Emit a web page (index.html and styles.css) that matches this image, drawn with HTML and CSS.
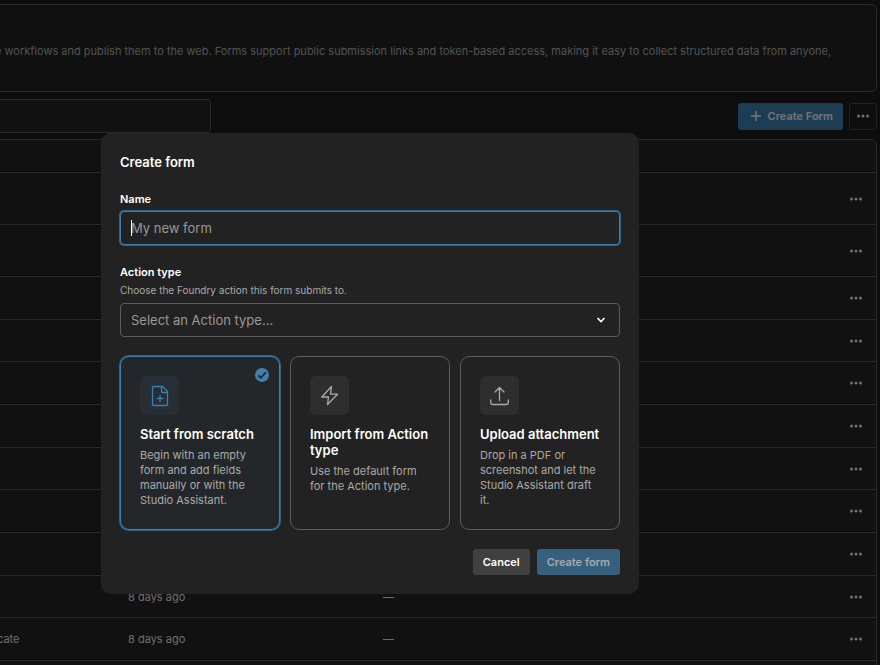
FILE: index.html
```
<!DOCTYPE html>
<html lang="en">

<head>
    <meta charset="UTF-8">
    <meta name="viewport" content="width=device-width, initial-scale=1.0">
    <title>Create form</title>
    <link rel="stylesheet" href="styles.css">
</head>

<body>
    <!-- shared icons -->
    <svg class="sprite" aria-hidden="true">
        <symbol id="dots" viewBox="0 0 12 4">
            <circle cx="1.500" cy="2" r="1.5" />
            <circle cx="6" cy="2" r="1.5" />
            <circle cx="10.500" cy="2" r="1.5" />
        </symbol>
    </svg>

    <main class="page">
        <section class="intro">
            <p>e workflows and publish them to the web. Forms support public submission links and token-based access, making it easy to collect structured data from anyone,</p>
        </section>

        <div class="toolbar">
            <input class="search" type="search" aria-label="Search forms">
            <div class="toolbar-actions">
                <button class="btn btn-new" type="button">
                    <svg width="12" height="12" viewBox="0 0 12 12"><path d="M6 1v10M1 6h10" /></svg>
                    Create Form
                </button>
                <button class="btn btn-more" type="button" aria-label="More actions"><svg class="dots"><use href="#dots" /></svg></button>
            </div>
        </div>

        <div class="table-wrap">
            <table class="forms">
                <thead>
                    <tr><th class="col-name"></th><th class="col-date"></th><th></th><th class="col-menu"></th></tr>
                </thead>
                <tbody>
                    <tr class="tall"><td></td><td></td><td></td><td><button class="row-menu" type="button" aria-label="Row menu"><svg class="dots"><use href="#dots" /></svg></button></td></tr>
                    <tr class="tall"><td></td><td></td><td></td><td><button class="row-menu" type="button" aria-label="Row menu"><svg class="dots"><use href="#dots" /></svg></button></td></tr>
                    <tr><td></td><td></td><td></td><td><button class="row-menu" type="button" aria-label="Row menu"><svg class="dots"><use href="#dots" /></svg></button></td></tr>
                    <tr><td></td><td></td><td></td><td><button class="row-menu" type="button" aria-label="Row menu"><svg class="dots"><use href="#dots" /></svg></button></td></tr>
                    <tr><td></td><td></td><td></td><td><button class="row-menu" type="button" aria-label="Row menu"><svg class="dots"><use href="#dots" /></svg></button></td></tr>
                    <tr><td></td><td></td><td></td><td><button class="row-menu" type="button" aria-label="Row menu"><svg class="dots"><use href="#dots" /></svg></button></td></tr>
                    <tr><td></td><td></td><td></td><td><button class="row-menu" type="button" aria-label="Row menu"><svg class="dots"><use href="#dots" /></svg></button></td></tr>
                    <tr><td></td><td></td><td></td><td><button class="row-menu" type="button" aria-label="Row menu"><svg class="dots"><use href="#dots" /></svg></button></td></tr>
                    <tr><td></td><td></td><td></td><td><button class="row-menu" type="button" aria-label="Row menu"><svg class="dots"><use href="#dots" /></svg></button></td></tr>
                    <tr><td></td><td>8 days ago</td><td>—</td><td><button class="row-menu" type="button" aria-label="Row menu"><svg class="dots"><use href="#dots" /></svg></button></td></tr>
                    <tr><td>cate</td><td>8 days ago</td><td>—</td><td><button class="row-menu" type="button" aria-label="Row menu"><svg class="dots"><use href="#dots" /></svg></button></td></tr>
                    <tr><td></td><td></td><td></td><td></td></tr>
                </tbody>
            </table>
        </div>
    </main>

    <div class="backdrop">
        <form class="modal" role="dialog" aria-labelledby="modal-title">
            <h2 class="modal-title" id="modal-title">Create form</h2>

            <div class="field">
                <label for="form-name">Name</label>
                <div class="input-wrap">
                    <input class="control focused" id="form-name" type="text" placeholder="My new form">
                    <span class="caret"></span>
                </div>
            </div>

            <div class="field">
                <label for="action-type">Action type</label>
                <p class="hint" id="action-hint">Choose the Foundry action this form submits to.</p>
                <div class="input-wrap">
                    <select class="control" id="action-type" aria-describedby="action-hint">
                        <option>Select an Action type...</option>
                    </select>
                    <svg class="chevron" width="10" height="6" viewBox="0 0 10 6"><path d="M1.5 1L5 4.5 8.5 1" /></svg>
                </div>
            </div>

            <div class="options">
                <label class="option selected">
                    <input type="radio" name="source" checked>
                    <svg class="check" width="14" height="14" viewBox="0 0 14 14"><circle cx="7" cy="7" r="7" /><path d="M3.3 7.3L5.9 9.8 10.8 4.2" /></svg>
                    <span class="option-icon">
                        <svg width="20" height="22" viewBox="0 0 20 22"><path d="M3.500 1.500H12.500L17.500 6.500V19.500Q17.500 20.500 16.500 20.500H3.500Q2.500 20.500 2.500 19.500V2.500Q2.500 1.500 3.500 1.500ZM11.500 1.800V6.500Q11.500 7.500 12.500 7.500H17.300M10 10.500V16.500M7 13.500H13" /></svg>
                    </span>
                    <span class="option-title">Start from scratch</span>
                    <span class="option-text">Begin with an empty form and add fields manually or with the Studio Assistant.</span>
                </label>
                <label class="option">
                    <input type="radio" name="source">
                    <span class="option-icon">
                        <svg width="20" height="22" viewBox="0 0 20 22"><path d="M11.500 1.500L1.800 12H8.500L7.500 19.500L17.500 9.200H10.500Z" /></svg>
                    </span>
                    <span class="option-title">Import from Action type</span>
                    <span class="option-text">Use the default form for the Action type.</span>
                </label>
                <label class="option">
                    <input type="radio" name="source">
                    <span class="option-icon">
                        <svg width="20" height="22" viewBox="0 0 20 22"><path d="M9.500 15.500V2.500M5 7L9.500 2.500 14 7M.7 14.800V17.300Q.7 19.500 3 19.500H16Q18.300 19.500 18.300 17.300V14.800" /></svg>
                    </span>
                    <span class="option-title">Upload attachment</span>
                    <span class="option-text">Drop in a PDF or screenshot and let the Studio Assistant draft it.</span>
                </label>
            </div>

            <div class="modal-actions">
                <button class="btn btn-cancel" type="button">Cancel</button>
                <button class="btn btn-submit" type="submit" disabled>Create form</button>
            </div>
        </form>
    </div>
</body>

</html>
```
FILE: styles.css
```
* {
    box-sizing: border-box;
}

body {
    margin: 0;
    height: 100vh;
    overflow: hidden;
    background-color: #1a1a1a;
    color: #fff;
    font-family: Inter, "Liberation Sans", sans-serif;
    font-size: 11px;
    line-height: 16px;
}

button,
input,
select {
    font: inherit;
    color: inherit;
}

.sprite {
    display: none;
}

.dots {
    display: block;
    width: 12px;
    height: 4px;
    fill: #e0e0e0;
}

/* page behind the dialog, it runs on past the left edge */
.page {
    height: calc(100vh - 4px);
    margin: 4px 3px 0 -8px;
    overflow: hidden;
}

.intro {
    height: 88px;
    padding: 38px 0 0 2px;
    border: 1px solid #545454;
    border-radius: 6px;
    background-color: #202020;
    color: #a4a4a4;
}

.intro p {
    margin: 0;
    white-space: nowrap;
}

.toolbar {
    display: flex;
    justify-content: space-between;
    align-items: center;
    margin: 7px 0 6px;
}

.search {
    width: 219px;
    height: 34px;
    border: 1px solid #545454;
    border-radius: 4px;
    background-color: #222;
}

.toolbar-actions {
    display: flex;
    gap: 6px;
}

.btn {
    display: flex;
    align-items: center;
    justify-content: center;
    height: 27px;
    padding: 0 10px;
    border: 0;
    border-radius: 3px;
    font-weight: 600;
}

.btn-new {
    gap: 6px;
    padding-left: 12px;
    background-color: #3b7ba8;
    color: #e8e8e8;
}

.btn-new svg {
    fill: none;
    stroke: #e8e8e8;
    stroke-width: 1.5;
}

.btn-more {
    width: 28px;
    padding: 0;
    border: 1px solid #444;
    background-color: #1c1c1c;
}

.table-wrap {
    border: 1px solid #545454;
    border-radius: 6px;
    background-color: #222;
    overflow: hidden;
}

.forms {
    width: 100%;
    border-spacing: 0;
    table-layout: fixed;
    color: #ddd;
}

.forms th,
.forms td {
    height: 43px;
    padding: 0 0 0 6px;
    border-bottom: 1px solid #545454;
}

.forms tr:nth-child(3n+1) td {
    height: 42px;
}

.forms thead th {
    height: 33px;
}

.forms tbody tr.tall td {
    height: 52px;
}

.forms td:first-child {
    padding-left: 4px;
}

.forms td:last-child {
    padding-left: 7px;
}

.forms .col-name {
    width: 129px;
}

.forms .col-date {
    width: 255px;
}

.forms .col-menu {
    width: 33px;
}

.row-menu {
    display: block;
    padding: 0;
    border: 0;
    background: none;
}

.backdrop {
    position: absolute;
    inset: 0;
    display: flex;
    justify-content: center;
    align-items: flex-start;
    padding: 133px 140px 0 0;
    background-color: rgba(0, 0, 0, 0.5);
}

.modal {
    width: 100%;
    max-width: 538px;
    padding: 19px;
    border-radius: 10px;
    background-color: #222;
}

.modal-title {
    margin: 0 0 19px;
    font-size: 13px;
    font-weight: 600;
    line-height: 20px;
}

.field {
    margin-bottom: 19px;
}

.field label {
    display: block;
    margin-bottom: 4px;
    font-weight: 600;
}

.hint {
    margin: -2px 0 5px;
    color: #aaa;
    font-size: 10px;
}

.input-wrap {
    position: relative;
}

.control {
    display: block;
    width: 100%;
    height: 34px;
    padding: 0 10px;
    border: 1px solid #5c5c5c;
    border-radius: 4px;
    outline: 0;
    background-color: #222;
    color: #999;
    font-size: 13px;
    appearance: none;
}

.control::placeholder {
    color: #999;
}

.control.focused {
    border-color: #3a7fae;
    box-shadow: 0 0 0 1px #2f6489;
}

.caret {
    position: absolute;
    top: 9px;
    left: 11px;
    width: 1px;
    height: 16px;
    background-color: #fff;
}

.chevron {
    position: absolute;
    top: 14px;
    right: 14px;
    fill: none;
    stroke: #fff;
    stroke-width: 1.6;
    pointer-events: none;
}

.options {
    display: grid;
    grid-template-columns: repeat(3, 1fr);
    gap: 10px;
    margin-bottom: 19px;
}

.option {
    position: relative;
    display: flex;
    flex-direction: column;
    align-items: flex-start;
    min-height: 174px;
    padding: 19px;
    border: 1px solid #5c5c5c;
    border-radius: 9px;
}

.option input {
    position: absolute;
    opacity: 0;
}

.option.selected {
    border-color: #3a7fae;
    background-color: #242729;
    box-shadow: 0 0 0 1px #2f6489;
}

.option-icon {
    display: flex;
    align-items: center;
    justify-content: center;
    width: 39px;
    height: 39px;
    margin-bottom: 11px;
    border-radius: 6px;
    background-color: #2e2e2e;
}

.option-icon svg {
    fill: none;
    stroke: #aaa;
    stroke-width: 1.3;
    stroke-linejoin: round;
    stroke-linecap: round;
}

.selected .option-icon {
    background-color: #272e35;
}

.selected .option-icon svg {
    stroke: #3a7fae;
}

.check {
    position: absolute;
    top: 11px;
    right: 10px;
    fill: #3f80ac;
}

.check path {
    fill: none;
    stroke: #222;
    stroke-width: 1.7;
}

.option-title {
    margin-bottom: 6px;
    font-size: 13px;
    font-weight: 600;
}

.option-text {
    color: #aaa;
    line-height: 15px;
}

.modal-actions {
    display: flex;
    justify-content: flex-end;
    gap: 7px;
}

.modal-actions .btn {
    height: 26px;
}

.btn-cancel {
    background-color: #404040;
}

.btn-submit {
    background-color: #35617f;
    color: #aaa;
}
```
